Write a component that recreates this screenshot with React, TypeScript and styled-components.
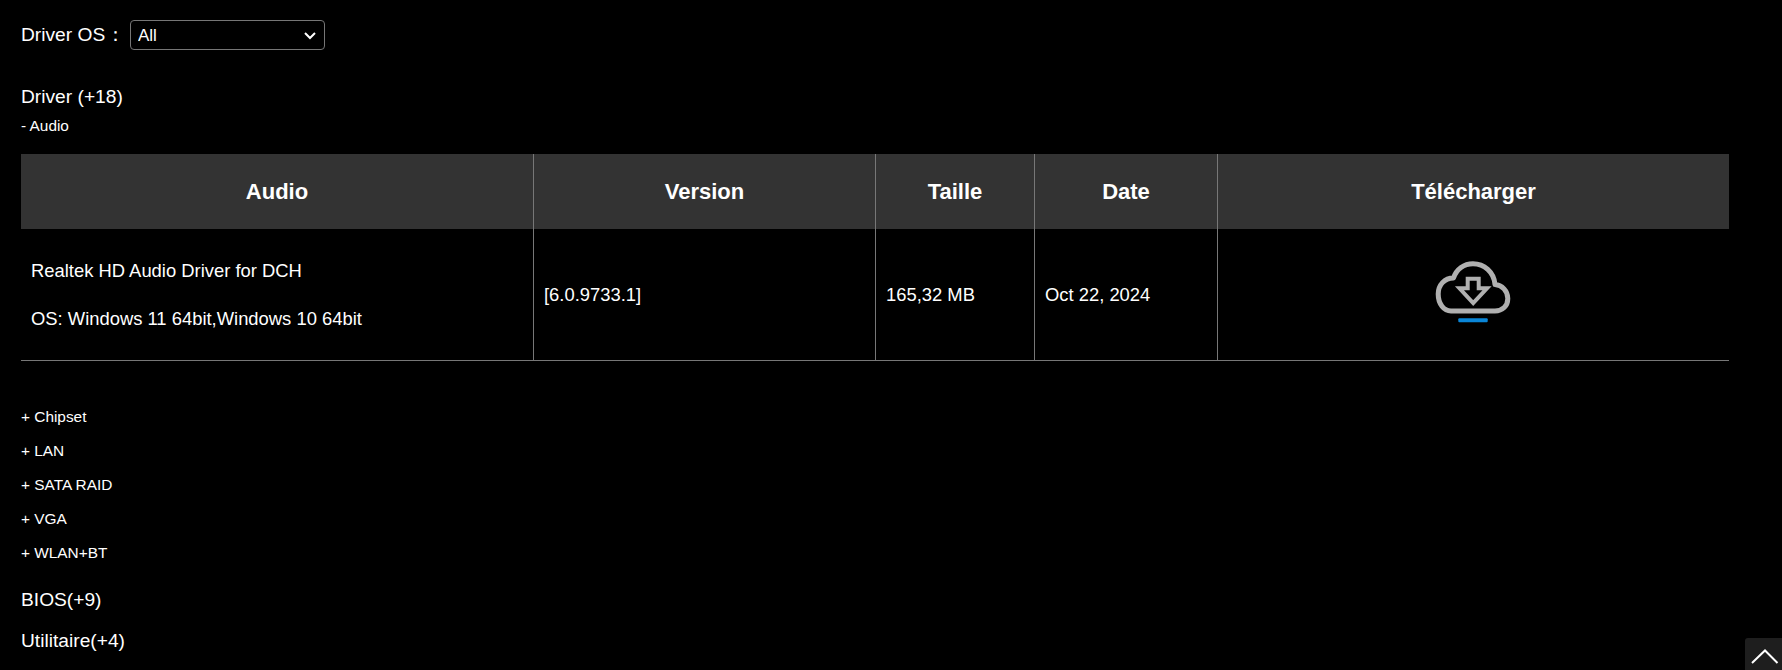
import React from "react";
import styled, { createGlobalStyle } from "styled-components";

const Global = createGlobalStyle`
  html, body { margin: 0; padding: 0; background: #000; color-scheme: dark; }
  body { font-family: "Liberation Sans", Arial, sans-serif; color: #fff; overflow: hidden; }
`;

const Page = styled.main`
  width: 1782px;
  height: 670px;
  box-sizing: border-box;
  padding: 20px 53px 0 21px;
  background: #000;
  position: relative;
  overflow: hidden;
`;

const FilterRow = styled.div`
  display: flex;
  align-items: center;
  height: 30px;
  font-size: 19.2px;
`;

const FilterLabel = styled.label`
  width: 109px;
  white-space: pre;
`;

const LabelColon = styled.span`
  margin-left: 1px;
`;

const SelectWrap = styled.div`
  position: relative;
  width: 195px;
  height: 30px;
  line-height: 0;
`;

const OsSelect = styled.select`
  appearance: none;
  width: 100%;
  height: 100%;
  box-sizing: border-box;
  font: 17px "Liberation Sans", Arial, sans-serif;
  color: #fff;
  background: #000;
  border: 1px solid #767676;
  border-radius: 4px;
  padding: 0 7px;
`;

const SelectArrow = styled.svg`
  position: absolute;
  right: 9px;
  top: 12px;
  pointer-events: none;
`;

const SectionTitle = styled.h2<{ $top: number }>`
  margin: ${(p) => p.$top}px 0 0;
  font-size: 19.2px;
  font-weight: 400;
  line-height: 24px;
`;

const SubTitle = styled.div`
  margin-top: 7px;
  font-size: 15.4px;
  line-height: 20px;
`;

const Table = styled.table`
  width: 1708px;
  margin-top: 18px;
  border-collapse: separate;
  border-spacing: 0;
  table-layout: fixed;
`;

const HeadCell = styled.th`
  height: 75px;
  padding: 0;
  background: #333;
  font-size: 22px;
  font-weight: 700;
  text-align: center;
  border-left: 1px solid #777;
  &:first-child { border-left: 0; }
`;

const Cell = styled.td`
  height: 131px;
  padding: 0 10px;
  font-size: 18.4px;
  border-left: 1px solid #777;
  border-bottom: 1px solid #777;
  &:first-child { border-left: 0; }
`;

const DriverLine = styled.p`
  margin: 0;
  line-height: 20px;
  & + & { margin-top: 28px; }
`;

const IconCell = styled(Cell)`
  text-align: center;
`;

const DownloadLink = styled.a`
  display: inline-block;
  line-height: 0;
  margin: 0 2px 5px 0;
`;

const Categories = styled.ul`
  list-style: none;
  margin: 46px 0 0;
  padding: 0;
`;

const Category = styled.li`
  height: 34px;
  font-size: 15.4px;
  line-height: 20px;
`;

const TopButton = styled.button`
  position: absolute;
  right: 0;
  top: 638px;
  width: 37px;
  height: 32px;
  padding: 0;
  border: 0;
  border-radius: 3px 0 0 0;
  background: #1e1e1e;
  line-height: 0;
`;

const CloudIcon = () => (
  <svg width="76" height="64" viewBox="0 0 76 64" fill="none">
    <path
      d="M16 51H60C67.5 51 72.8 46 72.8 38.5C72.8 31 67 25 60 24.5C59 12 49 3.7 38 3.7C29 3.7 21.5 9 18.5 18C9.5 18 3.2 25 3.2 34C3.2 44 9 51 16 51Z"
      stroke="#b0b0b0"
      strokeWidth="5"
      strokeLinejoin="round"
    />
    <path
      d="M32.7 18.7H43.7V28.3H52L38.2 43 24.5 28.3H32.7Z"
      stroke="#b0b0b0"
      strokeWidth="4"
      strokeLinejoin="miter"
    />
    <rect x="23.3" y="58.3" width="29.4" height="4" rx="1" fill="#0a86d8" />
  </svg>
);

const ChevronUp = () => (
  <svg width="37" height="32" viewBox="0 0 37 32" fill="none">
    <path d="M7 25L20 12.5 32.5 25" stroke="#fff" strokeWidth="2" />
  </svg>
);

const categories = ["+ Chipset", "+ LAN", "+ SATA RAID", "+ VGA", "+ WLAN+BT"];

export default function App() {
  return (
    <Page>
      <Global />
      <FilterRow>
        <FilterLabel htmlFor="os">
          Driver OS<LabelColon>：</LabelColon>
        </FilterLabel>
        <SelectWrap>
          <OsSelect id="os" defaultValue="All">
            <option>All</option>
          </OsSelect>
          <SelectArrow width="12" height="8" viewBox="0 0 12 8" fill="none">
            <path d="M1 1L6 6 11 1" stroke="#fff" strokeWidth="2" />
          </SelectArrow>
        </SelectWrap>
      </FilterRow>
      <SectionTitle $top={35}>Driver (+18)</SectionTitle>
      <SubTitle>- Audio</SubTitle>
      <Table>
        <colgroup>
          <col style={{ width: 512 }} />
          <col style={{ width: 342 }} />
          <col style={{ width: 159 }} />
          <col style={{ width: 183 }} />
          <col style={{ width: 512 }} />
        </colgroup>
        <thead>
          <tr>
            <HeadCell>Audio</HeadCell>
            <HeadCell>Version</HeadCell>
            <HeadCell>Taille</HeadCell>
            <HeadCell>Date</HeadCell>
            <HeadCell>Télécharger</HeadCell>
          </tr>
        </thead>
        <tbody>
          <tr>
            <Cell>
              <DriverLine>Realtek HD Audio Driver for DCH</DriverLine>
              <DriverLine>OS: Windows 11 64bit,Windows 10 64bit</DriverLine>
            </Cell>
            <Cell>[6.0.9733.1]</Cell>
            <Cell>165,32 MB</Cell>
            <Cell>Oct 22, 2024</Cell>
            <IconCell>
              <DownloadLink href="#" aria-label="Télécharger">
                <CloudIcon />
              </DownloadLink>
            </IconCell>
          </tr>
        </tbody>
      </Table>
      <Categories>
        {categories.map((c) => (
          <Category key={c}>{c}</Category>
        ))}
      </Categories>
      <SectionTitle $top={11}>BIOS(+9)</SectionTitle>
      <SectionTitle $top={17}>Utilitaire(+4)</SectionTitle>
      <TopButton aria-label="Haut de page">
        <ChevronUp />
      </TopButton>
    </Page>
  );
}
